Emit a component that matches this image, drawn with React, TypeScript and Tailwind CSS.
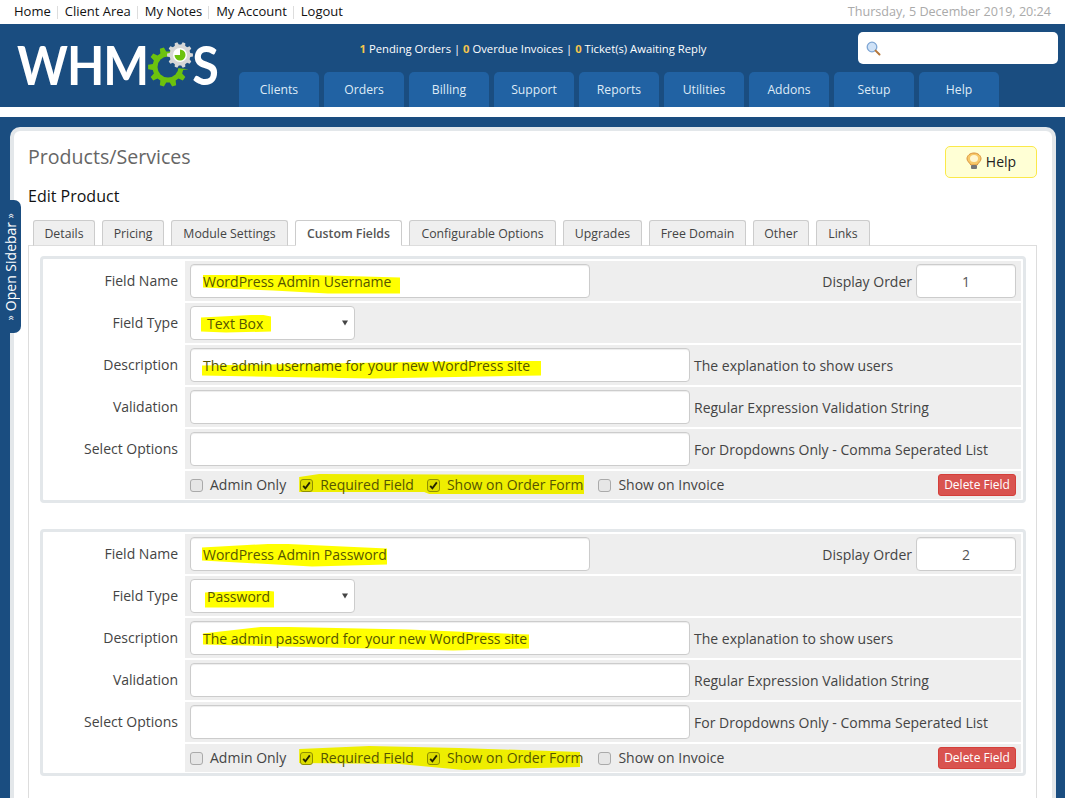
import React from 'react';

const font = { fontFamily: '"Open Sans", "Noto Sans", sans-serif' };

const navItems = ['Clients', 'Orders', 'Billing', 'Support', 'Reports', 'Utilities', 'Addons', 'Setup', 'Help'];
const tabs = [
    { label: 'Details', width: 'w-[62px]' },
    { label: 'Pricing', width: 'w-[62px]' },
    { label: 'Module Settings', width: 'w-[117px]' },
    { label: 'Custom Fields', width: 'w-[107px]' },
    { label: 'Configurable Options', width: 'w-[147px]' },
    { label: 'Upgrades', width: 'w-[79px]' },
    { label: 'Free Domain', width: 'w-[97px]' },
    { label: 'Other', width: 'w-[56px]' },
    { label: 'Links', width: 'w-[54px]' },
];

// builds a cog outline for the logo
const gearPath = (cx: number, cy: number, outer: number, inner: number, teeth: number) => {
    const pts: string[] = [];
    const step = (Math.PI * 2) / teeth;
    for (let i = 0; i < teeth; i++) {
        const a = i * step;
        const corners: [number, number][] = [
            [inner, a - step * 0.32],
            [outer, a - step * 0.17],
            [outer, a + step * 0.17],
            [inner, a + step * 0.32],
        ];
        corners.forEach(([r, t]) => pts.push(`${(cx + r * Math.cos(t)).toFixed(2)} ${(cy + r * Math.sin(t)).toFixed(2)}`));
    }
    return 'M' + pts.join('L') + 'Z';
};

const Logo = () => (
    <div className="flex items-center h-[40px] text-white font-bold text-[48.5px] leading-none tracking-[-1px]" style={{ fontFamily: 'Lato, sans-serif' }}>
        <span className="scale-y-[1.12]">WHM</span>
        <svg width="46" height="46" viewBox="0 0 46 46" className="mt-[2px] -mr-[2px] shrink-0">
            <path d={gearPath(20, 25, 20, 15.5, 10)} fill="#6cc20e" />
            <circle cx="20" cy="25" r="10.5" fill="#1a4d80" />
            <path d="M20 25 L34 0 L46 0 L46 27 L38 27 Z" fill="#1a4d80" />
            <path d={gearPath(32, 13, 13, 10.5, 10)} fill="#d6d6d6" />
            <circle cx="32" cy="13" r="7" fill="#ffffff" />
            <path d="M32 13 m0 -5.5 a5.5 5.5 0 1 1 -5.5 5.5 l5.5 0 Z" fill="#6cc20e" />
        </svg>
        <span className="scale-y-[1.12]">S</span>
    </div>
);

const SearchIcon = () => (
    <svg width="15" height="15" viewBox="0 0 15 15" className="shrink-0">
        <circle cx="6" cy="6" r="4.8" fill="#cfe2f7" stroke="#7ea6d4" strokeWidth="1.3" />
        <path d="M9.6 9.6 L13.5 13.5" stroke="#b5763a" strokeWidth="2" strokeLinecap="round" />
    </svg>
);

const BulbIcon = () => (
    <svg width="16" height="18" viewBox="0 0 16 18" className="shrink-0">
        <path d="M8 1 C4 1 1 3.6 1 6.8 C1 9.2 3.4 10.4 4.8 13 L11.2 13 C12.6 10.4 15 9.2 15 6.8 C15 3.6 12 1 8 1 Z" fill="#f7c868" stroke="#d9923c" strokeWidth="1" />
        <ellipse cx="8" cy="6.5" rx="4" ry="3.6" fill="#fff6cf" />
        <rect x="5" y="13" width="6" height="4" rx="1" fill="#777" />
    </svg>
);

// yellow marker stroke painted behind the text, shape holds the stroke's place and outline
const Marked: React.FC<{ children: React.ReactNode; shape: string }> = ({ children, shape }) => (
    <span className="relative inline-block leading-[19px] text-[#555500]">
        <span className={`absolute bg-[#ffff00] ${shape}`} />
        <span className="relative">{children}</span>
    </span>
);

const Field: React.FC<{ width: string; children?: React.ReactNode; center?: boolean }> = ({ width, children, center }) => (
    <div className={`${width} h-[34px] bg-white border border-[#cccccc] rounded-[4px] shadow-[inset_0_1px_1px_rgba(0,0,0,0.075)] flex items-center px-[12px] text-[14px] text-[#555] ${center ? 'justify-center' : ''}`}>
        {children}
    </div>
);

const Row: React.FC<{ label: string; children: React.ReactNode }> = ({ label, children }) => (
    <div className="flex h-[40px]">
        <div className="w-[142px] shrink-0 pr-[7px] pt-[7px] text-right text-[14px] leading-[26px] text-[#444]">{label}</div>
        <div className="flex-1 bg-[#eeeeee] flex items-center pl-[5px] pr-[5px]">{children}</div>
    </div>
);

const Check: React.FC<{ checked?: boolean }> = ({ checked }) => (
    <span className={`w-[13px] h-[13px] shrink-0 rounded-[3px] border flex items-center justify-center ${checked ? 'border-[#8f8f00] bg-[#dddd00]' : 'border-[#aaaaaa] bg-[#e6e6e6]'}`}>
        {checked && (
            <svg width="9" height="9" viewBox="0 0 9 9">
                <path d="M1.2 4.8 L3.4 7.4 L7.8 1.4" fill="none" stroke="#222200" strokeWidth="1.8" />
            </svg>
        )}
    </span>
);

const Hint: React.FC<{ children: React.ReactNode }> = ({ children }) => (
    <span className="ml-[4px] text-[14px] text-[#444]">{children}</span>
);

type FieldBoxProps = {
    name: string;
    type: string;
    desc: string;
    order: number;
    nameMark: string;
    typeMark: string;
    descMark: string;
    optionsMark: string;
};

const FieldBox: React.FC<FieldBoxProps> = ({ name, type, desc, order, nameMark, typeMark, descMark, optionsMark }) => (
    <div className="border-[3px] border-[#e3e7ea] rounded-[4px] pt-[2px] pr-[2px] flex flex-col gap-[2px]">
        <Row label="Field Name">
            <Field width="w-[400px]"><Marked shape={nameMark}>{name}</Marked></Field>
            <span className="ml-auto mr-[4px] text-[14px] text-[#444]">Display Order</span>
            <Field width="w-[100px]" center>{order}</Field>
        </Row>
        <Row label="Field Type">
            <div className="w-[165px] h-[34px] bg-white border border-[#cccccc] rounded-[4px] flex items-center pl-[16px] pr-[6px] text-[14px] text-[#555]">
                <Marked shape={typeMark}>{type}</Marked>
                <svg width="6" height="6" viewBox="0 0 7 6" className="ml-auto">
                    <path d="M0 0 L7 0 L3.5 6 Z" fill="#444" />
                </svg>
            </div>
        </Row>
        <Row label="Description">
            <Field width="w-[500px]"><Marked shape={descMark}>{desc}</Marked></Field>
            <Hint>The explanation to show users</Hint>
        </Row>
        <Row label="Validation">
            <Field width="w-[500px]" />
            <Hint>Regular Expression Validation String</Hint>
        </Row>
        <Row label="Select Options">
            <Field width="w-[500px]" />
            <Hint>For Dropdowns Only - Comma Seperated List</Hint>
        </Row>
        <div className="flex h-[28px] mb-[1px]">
            <div className="w-[142px] shrink-0" />
            <div className="flex-1 bg-[#eeeeee] flex items-center pl-[5px] pr-[5px] text-[14px] text-[#444]">
                <Check />
                <span className="ml-[7px] pb-[2px]">Admin Only</span>
                <span className="relative ml-[13px] flex items-center h-[22px] pl-[1px] text-[#555500]">
                    <span className={`absolute bg-[#eeee00] ${optionsMark}`} />
                    <span className="relative flex items-center">
                        <Check checked />
                        <span className="ml-[7px] pb-[2px]">Required Field</span>
                        <span className="ml-[13px]"><Check checked /></span>
                        <span className="ml-[7px] pb-[2px]">Show on Order Form</span>
                    </span>
                </span>
                <span className="ml-[15px]"><Check /></span>
                <span className="ml-[7px] pb-[2px]">Show on Invoice</span>
                <button className="ml-auto w-[78px] h-[22px] bg-[#d9534f] border border-[#d43f3a] rounded-[3px] text-white text-[12px] leading-none">Delete Field</button>
            </div>
        </div>
    </div>
);

export default function App() {
    return (
        <div className="relative h-[798px] w-[1065px] overflow-hidden bg-white" style={font}>
            {/* Top links */}
            <div className="h-[24px] flex items-center justify-between pl-[14px] pr-[14px] text-[13px]">
                <div className="flex items-center text-[#111]">
                    {['Home', 'Client Area', 'My Notes', 'My Account', 'Logout'].map((l, i) => (
                        <React.Fragment key={l}>
                            {i > 0 && <span className="ml-[6px] mr-[7px] h-[13px] w-px bg-[#ddd]" />}
                            <span>{l}</span>
                        </React.Fragment>
                    ))}
                </div>
                <span className="text-[#aaaaaa] text-[12.6px]">Thursday, 5 December 2019, 20:24</span>
            </div>

            {/* Header */}
            <div className="h-[83px] bg-[#1a4d80] flex pl-[17px]">
                <div className="w-[222px] shrink-0 pt-[20px]"><Logo /></div>
                <div className="flex-1 flex flex-col">
                    <div className="h-[48px] flex items-center">
                        <div className="w-[619px] pr-[31px] pt-[2px] text-center text-[11.25px] text-white">
                            <b className="text-[#f5c54d]">1</b> Pending Orders | <b className="text-[#f5c54d]">0</b> Overdue Invoices | <b className="text-[#f5c54d]">0</b> Ticket(s) Awaiting Reply
                        </div>
                        <div className="w-[200px] h-[32px] bg-white rounded-[5px] flex items-center pl-[8px]"><SearchIcon /></div>
                    </div>
                    <div className="flex gap-[5px]">
                        {navItems.map(n => (
                            <div key={n} className="w-[80px] h-[35px] pt-[2px] bg-[#2162a3] rounded-t-[5px] flex items-center justify-center text-[12.2px] text-[#dfeaf6]">{n}</div>
                        ))}
                    </div>
                </div>
            </div>

            <div className="h-[10px]" />

            {/* Page body */}
            <div className="bg-[#1a4d80] h-[681px] pt-[10px] pl-[10px] pr-[9px]">
                <div className="bg-white border-[4px] border-b-0 border-[#e3e7ea] rounded-t-[10px] pt-[12px] pl-[14px] pr-[15px] h-[700px]">
                    <div className="flex items-start justify-between">
                        <h1 className="text-[19.6px] leading-[28px] text-[#666]">Products/Services</h1>
                        <button className="mt-[3px] w-[92px] h-[32px] pb-[2px] bg-[#ffffd5] border border-[#fbe94a] rounded-[5px] flex items-center justify-center gap-[4px] text-[14px] text-[#222]">
                            <BulbIcon /> Help
                        </button>
                    </div>
                    <h2 className="mt-[6px] text-[16px] leading-[24px] text-[#111]">Edit Product</h2>

                    <div className="mt-[12px] pl-[5px] flex gap-[7px] relative z-10">
                        {tabs.map(t => (
                            <div
                                key={t.label}
                                className={`${t.width} h-[26px] pt-[2px] flex items-center justify-center whitespace-nowrap border border-[#cccccc] rounded-t-[3px] text-[12.3px] ${t.label === 'Custom Fields' ? 'bg-white border-b-white font-semibold text-[#555]' : 'bg-[#efefef] border-b-[#dddddd] text-[#444]'}`}
                            >
                                {t.label}
                            </div>
                        ))}
                    </div>

                    <div className="-mt-px border border-[#dddddd] pt-[10px] pl-[11px] pr-[10px] h-[600px] flex flex-col gap-[26px]">
                        <FieldBox
                            name="WordPress Admin Username"
                            type="Text Box"
                            desc="The admin username for your new WordPress site"
                            order={1}
                            nameMark="left-0 top-[3px] w-[197px] h-[20px] [clip-path:polygon(0_0,90px_0,197px_3px,197px_19px,125px_19px,70px_16px,0_13px)]"
                            typeMark="-left-[6px] top-[1px] w-[70px] h-[18px] [clip-path:polygon(0_3px,60px_0,70px_2px,70px_17px,25px_18px,0_17px)]"
                            descMark="-left-[1px] top-[5px] w-[339px] h-[18px] [clip-path:polygon(0_5px,180px_2px,339px_0,339px_15px,170px_18px,0_15px)]"
                            optionsMark="left-0 top-0 w-[285px] h-[20px] [clip-path:polygon(0_3px,20px_0,285px_1px,285px_20px,130px_20px,125px_18px,0_18px)]"
                        />
                        <FieldBox
                            name="WordPress Admin Password"
                            type="Password"
                            desc="The admin password for your new WordPress site"
                            order={2}
                            nameMark="-left-[1px] -top-[1px] w-[185px] h-[23px] [clip-path:polygon(0_4px,75px_0,185px_5px,185px_21px,110px_23px,0_17px)]"
                            typeMark="-left-[2px] top-[4px] w-[69px] h-[17px] [clip-path:polygon(0_2px,60px_0,69px_1px,69px_17px,0_17px)]"
                            descMark="left-0 -top-[2px] w-[326px] h-[24px] [clip-path:polygon(0_7px,62px_0,205px_3px,326px_8px,326px_22px,250px_24px,0_18px)]"
                            optionsMark="left-0 -top-[1px] w-[281px] h-[24px] [clip-path:polygon(0_3px,70px_0,160px_2px,281px_6px,281px_21px,165px_24px,100px_18px,0_17px)]"
                        />
                    </div>
                </div>
            </div>

            {/* Sidebar toggle */}
            <div className="absolute left-0 top-[200px] w-[21px] h-[133px] bg-[#1a4d80] rounded-r-[7px] flex items-center justify-center pr-[1px]">
                <span className="[writing-mode:vertical-rl] rotate-180 text-white text-[14px] whitespace-nowrap flex items-center gap-[4px]">
                    <span className="text-[10px]">»</span>
                    <span>Open Sidebar</span>
                    <span className="text-[10px]">»</span>
                </span>
            </div>
        </div>
    );
}
